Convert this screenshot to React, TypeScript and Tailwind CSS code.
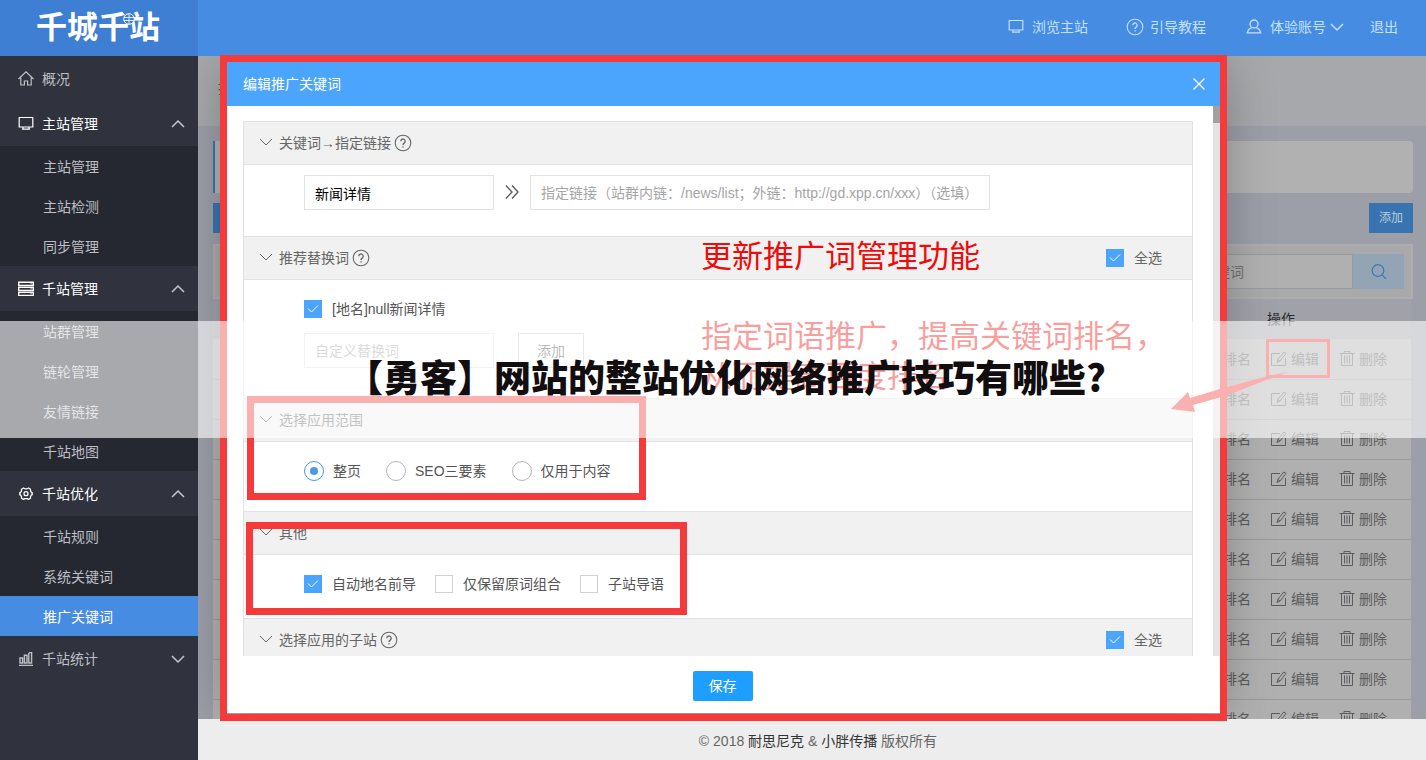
import { useState } from 'react';
import type { ReactNode } from 'react';
import clsx from 'clsx';

type IconProps = { className?: string };

const HomeIcon = ({ className }: IconProps) => (
    <svg viewBox="0 0 16 16" className={clsx('size-4', className)} fill="none" stroke="currentColor" strokeWidth="1.2">
        <path d="M.5 8 8 .8 15.500 8M2.800 6.500v7.500h3.600v-4h3.200v4h3.600V6.500" />
    </svg>
);

const MonitorIcon = ({ className }: IconProps) => (
    <svg viewBox="0 0 16 16" className={clsx('size-4', className)} fill="none" stroke="currentColor" strokeWidth="1.2">
        <path d="M1.2 1.500h13.600v9.500H1.200zM4 13.200h8M5 11.300v1.600M11 11.300v1.600" />
    </svg>
);

const ServerIcon = ({ className }: IconProps) => (
    <svg viewBox="0 0 16 16" className={clsx('size-4', className)} fill="none" stroke="currentColor" strokeWidth="1.4">
        <path d="M.7 1.200h14.600v3.200H.7zM.7 6.200h14.600v3.200H.7zM.7 11.200h14.600v3.200H.7z" />
        <path d="M12.500 2.800h1.200M12.500 7.800h1.200M12.500 12.800h1.200" strokeWidth="1" />
    </svg>
);

const GearIcon = ({ className }: IconProps) => (
    <svg viewBox="0 0 16 16" className={clsx('size-4', className)} fill="none" stroke="currentColor" strokeWidth="1.3" strokeLinejoin="round">
        <path d="M5.500 2 7 2.800h2L10.500 2l2 1.200v1.700l1 1.700h.7v2.200h-.7l-1 1.700v1.700l-2 1.200L9 12.600H7l-1.500.8-2-1.200v-1.700l-1-1.700h-.7V6.600h.7l1-1.700V3.200z" />
        <circle cx="8" cy="7.700" r="2" />
    </svg>
);

const ChartIcon = ({ className }: IconProps) => (
    <svg viewBox="0 0 16 16" className={clsx('size-4', className)} fill="none" stroke="currentColor" strokeWidth="1.4">
        <path d="M1 14.400h14M2 12V7h2.600v5zM6.400 12V4.200H9V12zM10.800 12V2.600l1-1h1.800V12z" />
    </svg>
);

const HelpIcon = ({ className }: IconProps) => (
    <svg viewBox="0 0 18 18" className={clsx('size-[18px]', className)} fill="none" stroke="currentColor" strokeWidth="1.1">
        <circle cx="9" cy="9" r="7.800" />
        <path d="M6.800 7.300a2.200 2.200 0 1 1 3.500 1.700c-.8.6-1.300.9-1.300 1.900M9 12.200v1.300" strokeWidth="1.300" />
    </svg>
);

const UserIcon = ({ className }: IconProps) => (
    <svg viewBox="0 0 16 16" className={clsx('size-4', className)} fill="none" stroke="currentColor" strokeWidth="1.3">
        <circle cx="8" cy="5" r="4" />
        <path d="M5.800 8.500 2.500 10.700 1.300 13.900h13.400l-1.200-3.200-3.300-2.200" />
    </svg>
);

const ChevronIcon = ({ className }: IconProps) => (
    <svg viewBox="0 0 14 14" className={clsx('size-3.5', className)} fill="none" stroke="currentColor">
        <path d="m1 4 6 6 6-6" />
    </svg>
);

const EditIcon = ({ className }: IconProps) => (
    <svg viewBox="0 0 16 16" className={clsx('size-4', className)} fill="none" stroke="currentColor">
        <path d="M9 2.500H.5v12h14V7M6 11.500l.8-3 6-7.500 2.200 1.500-6 7.500zM6.800 8.500 9 10" />
    </svg>
);

const TrashIcon = ({ className }: IconProps) => (
    <svg viewBox="0 0 16 16" className={clsx('size-4', className)} fill="none" stroke="currentColor">
        <path d="M.5 2.500h15M5 2.300V.5h6v1.800M2.500 2.500v12h11v-12M5.500 4.500v8M8 4.500v8M10.500 4.500v8" />
    </svg>
);

const SearchIcon = ({ className }: IconProps) => (
    <svg viewBox="0 0 16 16" className={clsx('size-4', className)} fill="none" stroke="currentColor" strokeWidth="1.2">
        <circle cx="7" cy="6.500" r="5.800" />
        <path d="m11 10.800 4 4" />
    </svg>
);

const menu = [
    { label: '概况', icon: HomeIcon },
    { label: '主站管理', icon: MonitorIcon, open: true, items: ['主站管理', '主站检测', '同步管理'] },
    { label: '千站管理', icon: ServerIcon, open: true, items: ['站群管理', '链轮管理', '友情链接', '千站地图'] },
    { label: '千站优化', icon: GearIcon, open: true, items: ['千站规则', '系统关键词', '推广关键词'] },
    { label: '千站统计', icon: ChartIcon, open: false, items: [] },
];

function Header() {
    return (
        <header className="flex h-14 shrink-0 bg-[#468ce3] text-[#c3e0ff]">
            <div className="relative w-[198px] bg-[#3f7fd3] pl-9 text-[31px] leading-[56px] font-bold text-white">
                千城千站
                <svg viewBox="0 0 12 12" className="absolute top-[13px] left-[123px] size-3" fill="#3f7fd3" stroke="#fff">
                    <circle cx="6" cy="6" r="5.300" />
                    <path d="M1 4.500h10M1 7.500h10M6 1v10" strokeWidth=".8" />
                </svg>
            </div>
            <nav className="flex flex-1 items-center justify-end pr-7 pb-0.5">
                <a href="#site" className="mr-[38px] flex items-center gap-2">
                    <MonitorIcon />
                    浏览主站
                </a>
                <a href="#guide" className="mr-10 flex items-center gap-1.5">
                    <HelpIcon />
                    引导教程
                </a>
                <button type="button" className="mr-[26px] flex items-center gap-2">
                    <UserIcon />
                    <span className="flex items-center gap-1">
                        体验账号
                        <ChevronIcon className="stroke-[1.5]" />
                    </span>
                </button>
                <a href="#logout">退出</a>
            </nav>
        </header>
    );
}

function Sidebar() {
    return (
        <aside className="w-[198px] shrink-0 bg-[#30333e] text-[#bdbfc4]">
            {menu.map((group) => (
                <div key={group.label}>
                    <button
                        type="button"
                        className={clsx('flex h-[45px] w-full items-center gap-2 pr-[13px] pl-[18px]', group.open && 'text-white')}
                    >
                        <group.icon />
                        {group.label}
                        {group.items && (
                            <ChevronIcon
                                className={clsx('ml-auto stroke-[1.5] text-[#c6c8cc]', group.open && 'rotate-180')}
                            />
                        )}
                    </button>
                    {group.items?.map((item) => (
                        <a
                            key={item}
                            href="#menu"
                            className={clsx(
                                'block h-10 pl-[43px] leading-[42px]',
                                item === '推广关键词' ? 'bg-[#468ce3] text-white' : 'bg-[#252830]'
                            )}
                        >
                            {item}
                        </a>
                    ))}
                </div>
            ))}
        </aside>
    );
}

function KeywordList() {
    return (
        <div className="text-[#5c5c5c]">
            <div className="h-[70px] bg-[#a7a8ab] pl-5 leading-[64px]">推广</div>
            <div className="pr-[13px] pl-[15px]">
                <div className="mt-[15px] h-[52px] rounded-r-sm border-l-2 border-[#3b73ae] bg-[#b1b1b1]" />
                <div className="mt-2.5 flex h-[30px] justify-between text-xs text-[#b7cbdc]">
                    <div className="w-11 bg-[#3874b1]" />
                    <button type="button" className="w-11 bg-[#3874b1]">添加</button>
                </div>
                <div className="mt-[11px] flex h-[55px] items-center justify-end border-2 border-[#adadad] bg-[#a9a9ab] pr-[7px]">
                    <input
                        type="text"
                        aria-label="关键词"
                        placeholder="关键词"
                        className="h-[35px] w-[152px] border border-[#9a9b9e] bg-[#b0b0b0] placeholder:text-[#707070]"
                    />
                    <button type="button" aria-label="搜索" className="flex h-[35px] w-[51px] items-center justify-center bg-[#93a5b4] text-[#3d77b0]">
                        <SearchIcon />
                    </button>
                </div>
                <div className="pr-0.5">
                    <table className="w-full table-fixed border-collapse bg-[#b0b0b0]">
                        <thead>
                            <tr className="h-10 bg-[#a0a1a9] text-left text-[#2c2c2c]">
                                <th />
                                <th className="w-36 font-normal">操作</th>
                            </tr>
                        </thead>
                        <tbody>
                            {Array.from({ length: 10 }, (_, i) => (
                                <tr key={i} className="h-10 border-b border-[#9b9b9b]">
                                    <td className="pr-4 text-right">排名</td>
                                    <td>
                                        <div className="flex gap-5 pl-1">
                                            <button type="button" className="flex items-center gap-1">
                                                <EditIcon />
                                                编辑
                                            </button>
                                            <button type="button" className="flex items-center gap-1">
                                                <TrashIcon />
                                                删除
                                            </button>
                                        </div>
                                    </td>
                                </tr>
                            ))}
                        </tbody>
                    </table>
                </div>
            </div>
        </div>
    );
}

function Check({ label, checked = false }: { label: string; checked?: boolean }) {
    const [on, setOn] = useState(checked);
    return (
        <label className="flex items-center gap-2.5">
            <span className="relative size-[18px]">
                <input
                    type="checkbox"
                    checked={on}
                    onChange={() => setOn(!on)}
                    className="block size-[18px] appearance-none border border-[#d2d2d2] bg-white checked:border-[#4ca5fd] checked:bg-[#4ca5fd]"
                />
                {on && (
                    <svg viewBox="0 0 18 18" className="pointer-events-none absolute inset-0" fill="none" stroke="#fff">
                        <path d="m4 8.500 3.500 3.500L14 5.500" />
                    </svg>
                )}
            </span>
            {label}
        </label>
    );
}

function Radio({ label, checked = false }: { label: string; checked?: boolean }) {
    return (
        <label className="flex items-center gap-[9px]">
            <input
                type="radio"
                name="scope"
                defaultChecked={checked}
                className="size-5 appearance-none rounded-full border border-[#b5b5b5] bg-white checked:border-[#4a98ea] checked:bg-[#4a98ea] checked:bg-clip-content checked:p-[5px]"
            />
            {label}
        </label>
    );
}

type SectionProps = { title: string; help?: boolean; selectAll?: boolean; className?: string; children?: ReactNode };

function Section({ title, help, selectAll, className, children }: SectionProps) {
    return (
        <section>
            <div className="flex h-11 items-center border-y border-[#e2e2e2] bg-[#f1f1f1] pr-[30px] pl-[15px] text-[#666]">
                <ChevronIcon className="mr-1.5 mb-0.5" />
                <h3>{title}</h3>
                {help && <HelpIcon className="ml-[3px]" />}
                {selectAll && (
                    <div className="ml-auto">
                        <Check label="全选" checked />
                    </div>
                )}
            </div>
            <div className={clsx('pl-[60px]', className)}>{children}</div>
        </section>
    );
}

function EditDialog() {
    return (
        <div
            role="dialog"
            aria-label="编辑推广关键词"
            className="absolute inset-y-1.5 right-[206px] left-[29px] flex flex-col bg-white text-[#555] shadow-[1px_1px_50px_rgba(0,0,0,0.3)]"
        >
            <div className="flex h-11 shrink-0 items-center justify-between bg-[#4ca5fd] pr-[15px] pl-4 text-white">
                <h2>编辑推广关键词</h2>
                <button type="button" aria-label="关闭">
                    <svg viewBox="0 0 12 12" className="size-3" fill="none" stroke="currentColor" strokeWidth="1.3">
                        <path d="m.5.5 11 11M11.500.5l-11 11" />
                    </svg>
                </button>
            </div>
            <div className="flex min-h-0 flex-1 overflow-hidden">
                <div className="flex-1 pt-[15px] pr-5 pl-4">
                    <div className="border-x border-[#e2e2e2]">
                        <Section title="关键词→指定链接" help className="flex h-[71px] items-start pt-2.5">
                            <input
                                type="text"
                                aria-label="关键词"
                                defaultValue="新闻详情"
                                className="h-[35px] w-[190px] border border-[#e2e2e2] px-2.5 text-black"
                            />
                            <svg viewBox="0 0 14 14" className="mx-[11px] mt-2.5 size-3.5" fill="none" stroke="currentColor" strokeWidth="1.3">
                                <path d="m1 .5 6 6.500-6 6.500M7 .5l6 6.500-6 6.500" />
                            </svg>
                            <input
                                type="text"
                                aria-label="指定链接"
                                placeholder="指定链接（站群内链：/news/list；外链：http://gd.xpp.cn/xxx）（选填）"
                                className="h-[35px] w-[460px] border border-[#e2e2e2] pl-2.5 placeholder:text-[#a5a5a5]"
                            />
                        </Section>
                        <Section title="推荐替换词" help selectAll className="h-[118px] pt-[19px]">
                            <div className="flex">
                                <Check label="[地名]null新闻详情" checked />
                            </div>
                            <div className="mt-3.5 flex gap-6">
                                <input
                                    type="text"
                                    aria-label="自定义替换词"
                                    placeholder="自定义替换词"
                                    className="h-[35px] w-[190px] border border-[#e2e2e2] px-2.5 placeholder:text-[#a5a5a5]"
                                />
                                <button type="button" className="h-[35px] w-[66px] border border-[#c9c9c9]">添加</button>
                            </div>
                        </Section>
                        <Section title="选择应用范围" className="flex h-[69px] items-start gap-[25px] pt-[19px]">
                            <Radio label="整页" checked />
                            <Radio label="SEO三要素" />
                            <Radio label="仅用于内容" />
                        </Section>
                        <Section title="其他" className="flex h-[63px] items-start gap-[19px] pt-[19px]">
                            <Check label="自动地名前导" checked />
                            <Check label="仅保留原词组合" />
                            <Check label="子站导语" />
                        </Section>
                        <Section title="选择应用的子站" help selectAll />
                    </div>
                </div>
                <div className="w-[7px] bg-[#e2e2e4]">
                    <div className="h-[17px] bg-[#a1a1a1]" />
                </div>
            </div>
            <div className="flex h-[57px] shrink-0 items-center justify-center pt-0.5 pr-0.5">
                <button type="button" className="h-[30px] w-[60px] rounded-xs bg-[#1e9fff] text-white">保存</button>
            </div>
        </div>
    );
}

// Red marks and notes laid over the whole screen
function Annotations() {
    return (
        <div className="pointer-events-none absolute inset-0">
            <div className="absolute top-[55px] right-[199px] bottom-[39px] left-[220px] border-7 border-[#f43a3a]" />
            <div className="absolute top-[396px] left-[247px] h-[104px] w-[399px] border-7 border-[#f43a3a]" />
            <div className="absolute top-[522px] left-[246px] h-[93px] w-[441px] border-7 border-[#f43a3a]" />
            <div className="absolute top-[339px] right-24 h-[39px] w-16 border-3 border-[#f43a3a]" />
            <svg viewBox="0 0 120 40" className="absolute top-[372px] right-[136px] h-10 w-[120px]" fill="#f43a3a">
                <path d="M1 37 18 20l2 6 30-9L98 4l20-4-19 7-44 17-32 9 2 7z" />
            </svg>
            <div className="absolute top-[237px] left-[701px] text-[31px] leading-10 text-[#f00a0a]">
                <p>更新推广词管理功能</p>
                <p className="mt-10">指定词语推广，提高关键词排名，</p>
                <p>从而提高百度排名</p>
            </div>
        </div>
    );
}

export default function App() {
    return (
        <div className="relative flex h-screen flex-col overflow-hidden font-['Liberation_Sans','Noto_Sans_CJK_SC',sans-serif] text-sm">
            <Header />
            <div className="flex min-h-0 flex-1">
                <Sidebar />
                <div className="flex min-w-0 flex-1 flex-col">
                    <main className="relative min-h-0 flex-1 overflow-hidden bg-[#9c9ea8]">
                        <KeywordList />
                        <EditDialog />
                    </main>
                    <footer className="flex h-[41px] shrink-0 items-center justify-center bg-[#ededed] pt-0.5 pl-3 text-[#666]">
                        <p>
                            © 2018 <a href="#nicenic" className="text-[#333]">耐思尼克</a> &amp;{' '}
                            <a href="#xiaopang" className="text-[#333]">小胖传播</a> 版权所有
                        </p>
                    </footer>
                </div>
            </div>
            <Annotations />
            <div className="absolute inset-x-0 top-[321px] flex h-[117px] items-center justify-center bg-white/60 pb-1.5 pl-[26px]">
                <h1 className="font-['Noto_Sans_CJK_SC',sans-serif] text-[37px] font-black whitespace-nowrap text-[#120e0f]">
                    【勇客】网站的整站优化网络推广技巧有哪些?
                </h1>
            </div>
        </div>
    );
}
